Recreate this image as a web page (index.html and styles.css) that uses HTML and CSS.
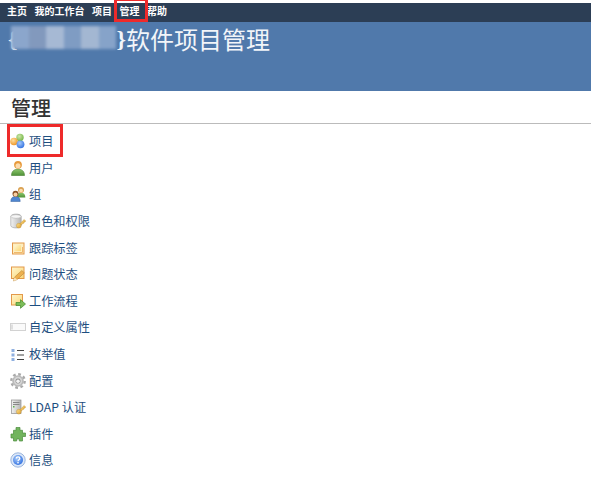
FILE: index.html
```html
<!DOCTYPE html>
<html lang="zh">
<head>
  <meta charset="UTF-8" />
  <title>管理 - 软件项目管理</title>
  <link rel="stylesheet" href="styles.css">
</head>
<body>

  <svg class="defs">
    <defs>
      <radialGradient id="green" cx=".4" cy=".35" r=".7"><stop offset="0" stop-color="#cfe8a8"/><stop offset="1" stop-color="#6fb344"/></radialGradient>
      <radialGradient id="orange" cx=".4" cy=".35" r=".7"><stop offset="0" stop-color="#fde0a0"/><stop offset="1" stop-color="#ef9322"/></radialGradient>
      <radialGradient id="blue" cx=".4" cy=".35" r=".7"><stop offset="0" stop-color="#a8cbfa"/><stop offset="1" stop-color="#2f6fe0"/></radialGradient>
      <linearGradient id="note" x1="0" y1="0" x2="1" y2="1"><stop offset="0" stop-color="#fff6cf"/><stop offset="1" stop-color="#fbd673"/></linearGradient>
      <linearGradient id="metal" x1="0" y1="0" x2="1" y2="0"><stop offset="0" stop-color="#f2f2f2"/><stop offset="1" stop-color="#b5b5b5"/></linearGradient>
      <linearGradient id="shirt" x1="0" y1="0" x2="0" y2="1"><stop offset="0" stop-color="#8cc66c"/><stop offset="1" stop-color="#4f9138"/></linearGradient>
      <linearGradient id="gold" x1="0" y1="0" x2="1" y2="1"><stop offset="0" stop-color="#fbe08a"/><stop offset="1" stop-color="#e0a030"/></linearGradient>
    </defs>
  </svg>

  <nav class="topnav">
    <a>主页</a>
    <a>我的工作台</a>
    <a>项目</a>
    <a class="marked">管理</a>
    <a>帮助</a>
  </nav>

  <header class="banner">
    <h1>
      <span class="brace">{</span>
      <span class="blur">
        <i class="b1"></i><i class="b2"></i><i class="b3"></i><i class="b4"></i><i class="b5"></i><i class="b6"></i>
      </span>
      <span class="brace">}</span>软件项目管理
    </h1>
  </header>

  <main>
    <h2>管理</h2>
    <ul class="menu">
      <li class="marked-row">
        <svg viewBox="0 0 16 16"><circle cx="10" cy="4.500" r="3.700" fill="url(#green)"/><circle cx="4" cy="8.500" r="3.800" fill="url(#orange)"/><circle cx="10.500" cy="11.300" r="3.900" fill="url(#blue)"/></svg>
        项目
      </li>
      <li>
        <svg viewBox="0 0 16 16"><path d="M1.500 15.500c0-4 2.300-6.300 6.500-6.300s6.500 2.300 6.500 6.300z" fill="url(#shirt)" stroke="#47802f" stroke-width=".6"/><circle cx="8" cy="4.800" r="3.900" fill="#e79a3c"/><circle cx="8" cy="5.800" r="2.500" fill="#fcdcae"/></svg>
        用户
      </li>
      <li>
        <svg viewBox="0 0 16 16"><path d="M7 11.500c0-3.500 1.500-4.800 4-4.800s4.300 1.300 4.300 4.800z" fill="url(#shirt)"/><circle cx="11" cy="4" r="3" fill="#d9a050"/><circle cx="11" cy="4.600" r="1.900" fill="#fcdcae"/><path d="M.8 15.500c0-3.500 1.800-5 4.700-5s4.700 1.500 4.700 5z" fill="#4f86d0" stroke="#335f9c" stroke-width=".5"/><circle cx="5.500" cy="7.800" r="3" fill="#8a5228"/><circle cx="5.500" cy="8.500" r="2" fill="#f8cfa0"/></svg>
        组
      </li>
      <li>
        <svg viewBox="0 0 16 16"><path d="M.8 3.500c0-3.200 10.400-3.200 10.400 0v9c0 3.200-10.400 3.200-10.400 0z" fill="url(#metal)" stroke="#9a9a9a" stroke-width=".6"/><ellipse cx="6" cy="3.500" rx="5" ry="1.800" fill="#f6f6f6" stroke="#a8a8a8" stroke-width=".5"/><path d="M9.800 10.800l4.400-4.300 1.500 1.500-.7 1-1 .2-.2 1-1 .3-1 1.200z" fill="url(#gold)" stroke="#c08a28" stroke-width=".4"/><circle cx="8.800" cy="12.700" r="2.400" fill="url(#gold)" stroke="#c08a28" stroke-width=".4"/></svg>
        角色和权限
      </li>
      <li>
        <svg viewBox="0 0 16 16"><rect x="2.500" y="3" width="11.500" height="11" fill="#fdeec0" stroke="#e3994a"/><rect x="4.500" y="5" width="6.500" height="6" fill="url(#note)"/><path d="M4 12.500h8.500V7" fill="none" stroke="#f0b86a"/></svg>
        跟踪标签
      </li>
      <li>
        <svg viewBox="0 0 16 16"><rect x="1.500" y="1" width="12.500" height="11.500" fill="url(#note)" stroke="#e3994a"/><path d="M3.500 15l1-3.800 7.300-6.700 2.600 2.400-7.300 6.700z" fill="#eeb04e" stroke="#a8762e" stroke-width=".5"/><path d="M3.500 15l1-3.800 2.600 2.600z" fill="#fbe6c0"/></svg>
        问题状态
      </li>
      <li>
        <svg viewBox="0 0 16 16"><rect x="1.500" y="1.500" width="11" height="10.500" fill="url(#note)" stroke="#e3994a"/><path d="M6 9.500h4.500v-2.800l5 4.300-5 4.300v-2.800h-4.500z" fill="#7cbc58" stroke="#3f8a2c" stroke-width=".7"/></svg>
        工作流程
      </li>
      <li>
        <svg class="wide" viewBox="0 0 16 8"><rect x=".5" y=".5" width="15" height="7" fill="#fafafa" stroke="#d2d2d2"/><rect x="1.500" y="1.500" width="1" height="5" fill="#c4c4c4"/></svg>
        自定义属性
      </li>
      <li>
        <svg viewBox="0 0 16 16"><rect x="1.500" y="3" width="3" height="3" fill="#8fb0e0"/><rect x="1.500" y="7.500" width="3" height="3" fill="#8fb0e0"/><rect x="1.500" y="12" width="3" height="3" fill="#8fb0e0"/><path d="M7 4.500h7M7 9h7M7 13.500h7" stroke="#444" stroke-width="1.200"/></svg>
        枚举值
      </li>
      <li>
        <svg viewBox="0 0 16 16"><circle cx="8" cy="8" r="6.700" fill="none" stroke="#a9a9a9" stroke-width="2.400" stroke-dasharray="2.700 2.560"/><circle cx="8" cy="8" r="5.800" fill="#b9b9b9"/><circle cx="8" cy="8" r="4.200" fill="#d6d6d6"/><circle cx="8" cy="8" r="2.500" fill="#8f8f8f"/><circle cx="8" cy="8.300" r="1.800" fill="#f4f4f4"/></svg>
        配置
      </li>
      <li>
        <svg viewBox="0 0 16 16"><rect x="1.500" y="1" width="9.500" height="13.500" fill="url(#metal)" stroke="#8f8f8f" stroke-width=".7"/><path d="M3 3.500h6.500M3 5.500h6.500" stroke="#888"/><rect x="3" y="7" width="1.500" height="1.500" fill="#5db04a"/><path d="M9.800 10.800l4.400-4.300 1.500 1.500-.7 1-1 .2-.2 1-1 .3-1 1.200z" fill="url(#gold)" stroke="#c08a28" stroke-width=".4"/><circle cx="8.800" cy="12.700" r="2.400" fill="url(#gold)" stroke="#c08a28" stroke-width=".4"/></svg>
        LDAP 认证
      </li>
      <li>
        <svg viewBox="0 0 16 16"><path d="M6 1.500h4v2.800h2.500v2.700h3v3.500h-3v4.500h-3.200v-2h-2.600v2h-3.200v-3h-2.500v-4h2.500v-3.700h2.500z" fill="#72b45e" stroke="#4a8c3c" stroke-width=".7"/></svg>
        插件
      </li>
      <li>
        <svg viewBox="0 0 16 16"><circle cx="8" cy="8" r="7.200" fill="#dbe7f8" stroke="#86a6d6" stroke-width=".8"/><circle cx="8" cy="8" r="5" fill="url(#blue)"/><path d="M6.300 6.500c0-2.200 3.500-2.200 3.500 0 0 1.300-1.800 1.300-1.800 2.700" fill="none" stroke="#fff" stroke-width="1.300"/><rect x="7.300" y="10" width="1.400" height="1.400" fill="#fff"/></svg>
        信息
      </li>
    </ul>
  </main>

</body>
</html>
```
FILE: styles.css
```css
body {
  margin: 0;
  padding-top: 3px;
  background: #fff;
  font-family: "Noto Sans CJK SC", "Liberation Sans", sans-serif;
}

.defs {
  display: block;
  width: 0;
  height: 0;
}

.topnav {
  display: flex;
  gap: 7.500px;
  height: 16px;
  padding: 0 0 3px 7px;
  align-items: center;
  background: #2c3e55;
  color: #fff;
  font-size: 10px;
  font-weight: 700;
  line-height: 14px;
}

.topnav a {
  white-space: nowrap;
}

.topnav .marked {
  position: relative;
}

.topnav .marked::after {
  content: "";
  position: absolute;
  top: -6px;
  left: -6px;
  width: 28px;
  height: 18px;
  border: 3px solid #ee2a2a;
}

.banner {
  height: 69px;
  background: #5079ab;
}

.banner h1 {
  margin: 0;
  padding: 2px 0 0 8px;
  display: flex;
  align-items: center;
  color: #f2f5f9;
  font-size: 24px;
  font-weight: 400;
  line-height: 30px;
}

.brace {
  font-family: "Liberation Serif", serif;
  font-weight: 700;
}

.blur {
  display: flex;
  height: 23px;
  margin: -3px 0 0 -6px;
  filter: blur(1.500px);
}

.blur i {
  display: block;
  width: 17.500px;
}

.b1 { background: #8ba6cc; }
.b2 { background: #8299bd; }
.b3 { background: #a6b9d4; }
.b4 { background: #7f9cc3; }
.b5 { background: #a3b7d2; }
.b6 { background: #86a3c9; }

main h2 {
  margin: 0;
  padding: 4px 0 0 11px;
  height: 28px;
  line-height: 26px;
  color: #333;
  font-size: 20px;
  font-weight: 500;
  border-bottom: 1px solid #bbb;
}

.menu {
  list-style: none;
  margin: 0;
  padding: 4px 0 0 10px;
}

.menu li {
  display: flex;
  align-items: center;
  gap: 3px;
  height: 26.600px;
  color: #1d4e80;
  font-size: 12.200px;
}

.menu svg {
  width: 16px;
  height: 16px;
  flex: none;
}

.menu svg.wide {
  height: 8px;
}

.marked-row {
  position: relative;
}

.marked-row::after {
  content: "";
  position: absolute;
  top: -4px;
  left: -3px;
  width: 50px;
  height: 27px;
  border: 3px solid #ee2a2a;
}
```
